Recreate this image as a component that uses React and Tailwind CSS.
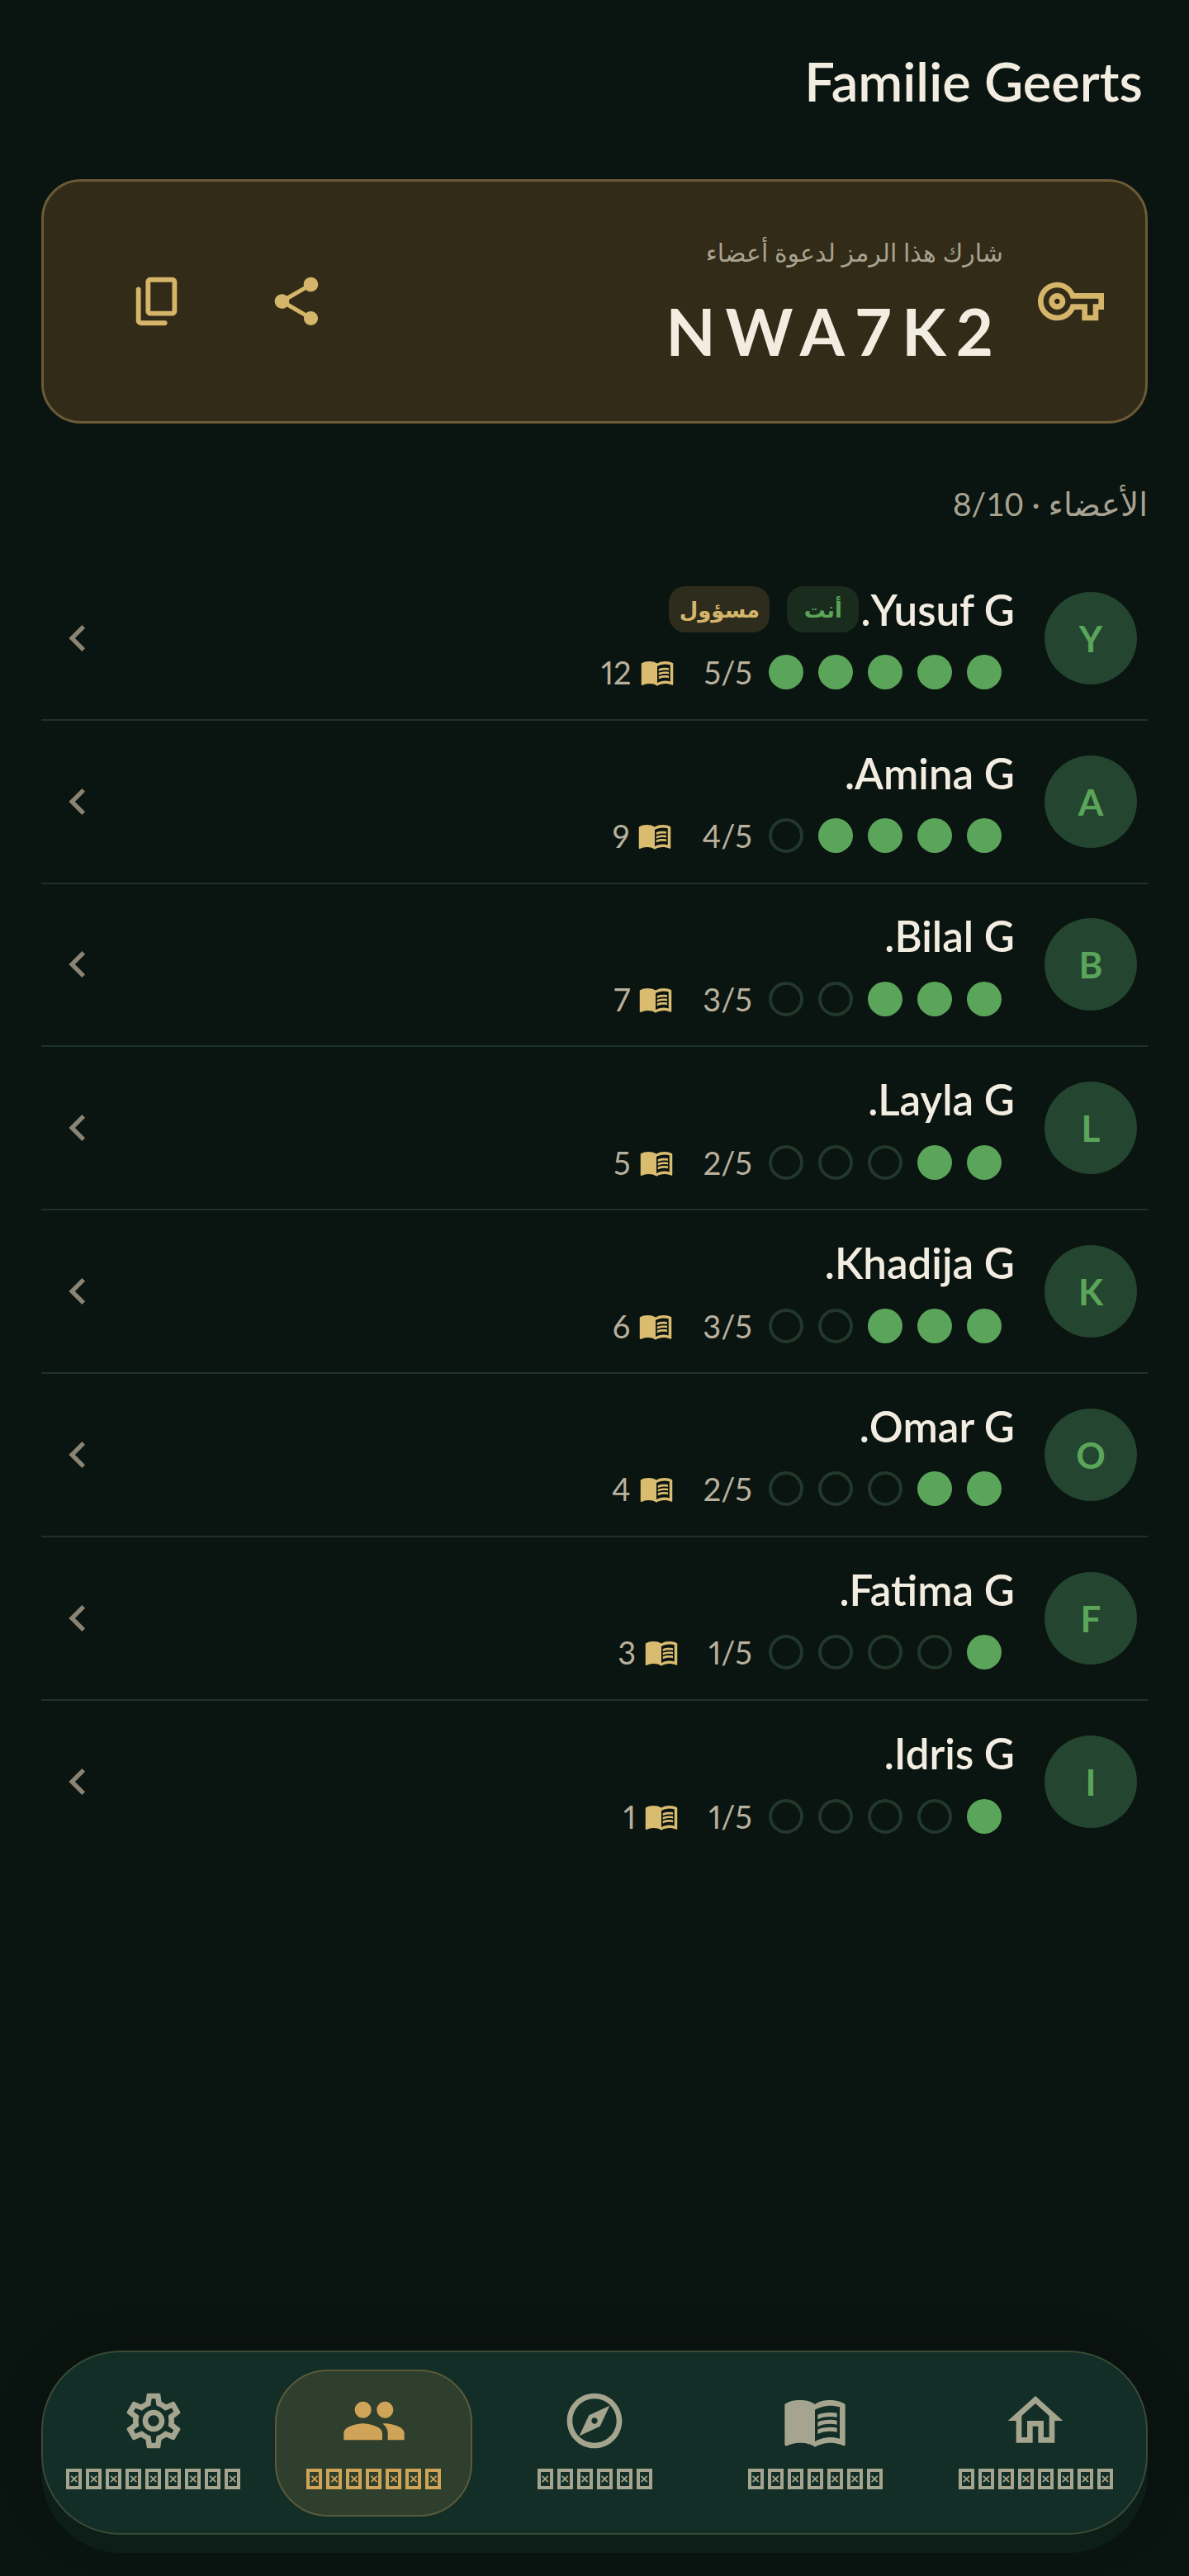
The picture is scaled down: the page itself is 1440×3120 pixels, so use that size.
import { MdChevronLeft, MdGroup, MdMenuBook, MdOutlineExplore, MdOutlineHome, MdOutlineSettings, MdOutlineVpnKey, MdShare } from 'react-icons/md'

const members = [
  { name: 'Yusuf G.', initial: 'Y', done: 5, books: 12, self: true },
  { name: 'Amina G.', initial: 'A', done: 4, books: 9 },
  { name: 'Bilal G.', initial: 'B', done: 3, books: 7 },
  { name: 'Layla G.', initial: 'L', done: 2, books: 5 },
  { name: 'Khadija G.', initial: 'K', done: 3, books: 6 },
  { name: 'Omar G.', initial: 'O', done: 2, books: 4 },
  { name: 'Fatima G.', initial: 'F', done: 1, books: 3 },
  { name: 'Idris G.', initial: 'I', done: 1, books: 1 }
]

const tabs = [
  { label: 'الرئيسية', Icon: MdOutlineHome },
  { label: 'التلاوة', Icon: MdMenuBook },
  { label: 'استكشف', Icon: MdOutlineExplore },
  { label: 'العائلة', Icon: MdGroup, active: true },
  { label: 'الإعدادات', Icon: MdOutlineSettings }
]

const CopyIcon = () => (
  <svg viewBox="0 0 24 24" fill="currentColor" className="w-[70px] h-[70px]">
    <path d="M15 20H5V7c0-.55-.45-1-1-1s-1 .45-1 1v13c0 1.1.9 2 2 2h10c.55 0 1-.45 1-1s-.45-1-1-1zm5-4V4c0-1.1-.9-2-2-2H9c-1.1 0-2 .9-2 2v12c0 1.1.9 2 2 2h9c1.1 0 2-.9 2-2zm-2 0H9V4h9v12z" />
  </svg>
)

// the labels show up as missing-glyph boxes in the reference
const TofuLabel = ({ label }) => (
  <div aria-label={label} className="flex gap-[5px]">
    {Array.from(label).map((ch, i) => (
      <span key={i} className="flex items-center justify-center w-[19px] h-[25px] border-[4px] border-current text-[14px] font-bold leading-none font-['DejaVu_Sans',sans-serif]">
        ×
      </span>
    ))}
  </div>
)

const MemberRow = ({ member, last }) => (
  <div className={`flex items-center h-[197.8px] pr-[13px] pl-[12px] ${last ? '' : 'border-b-2 border-[#1F3229]'}`}>
    <div className="flex items-center justify-center w-[112px] h-[112px] rounded-full bg-[#24452F] text-[#5AA55A] text-[44px] font-bold">
      {member.initial}
    </div>
    <div className="flex-1 mr-[36px]">
      <div className="flex items-center h-[56px] gap-[2px]">
        <span className="text-[#F2EDE0] text-[51px] font-semibold leading-none">{member.name}</span>
        {member.self && (
          <div className="flex gap-[21px]">
            <span className="flex items-center justify-center w-[87px] h-[56px] rounded-[20px] bg-[#1A2C1D] text-[#5AA55A] text-[26px] font-semibold">أنت</span>
            <span className="flex items-center justify-center w-[122px] h-[56px] rounded-[20px] bg-[#2E2C1C] text-[#D4B56A] text-[26px] font-semibold">مسؤول</span>
          </div>
        )}
      </div>
      <div className="flex items-center mt-[27px] pr-[16px]">
        <div className="flex gap-[18px]">
          {[0, 1, 2, 3, 4].map((i) => (
            <span
              key={i}
              className={i < member.done ? 'w-[42px] h-[42px] rounded-full bg-[#5AA55A]' : 'w-[42px] h-[42px] rounded-full border-[4px] border-[#22382C]'}
            />
          ))}
        </div>
        <span className="mr-[20px] text-[#B8B09C] text-[38px] leading-none proportional-nums" dir="ltr">{member.done}/5</span>
        <MdMenuBook className="mr-[36px] w-[42px] h-[42px] text-[#D9BC70]" />
        <span className="mr-[10px] text-[#B8B09C] text-[38px] leading-none proportional-nums">{member.books}</span>
      </div>
    </div>
    <MdChevronLeft className="w-[64px] h-[64px] text-[#8A8474]" />
  </div>
)

const App = () => {
  return (
    <div dir="rtl" className="min-h-screen flex flex-col bg-[#0A1410] px-[50px] pb-[50px] font-['Lato','DejaVu_Sans',sans-serif]">
      {/* Header */}
      <div className="flex items-center h-[217px] pb-[20px] pr-[6px]">
        <h1 className="text-[#F2EDE0] text-[65px] font-semibold" dir="ltr">Familie Geerts</h1>
      </div>

      {/* Invite code */}
      <div className="flex items-center h-[296px] pr-[50px] pl-[103px] rounded-[48px] border-[3px] border-[#6B5A35] bg-[#322B17]">
        <MdOutlineVpnKey className="w-[80px] h-[80px] text-[#D4B56A]" />
        <div className="mr-[42px] pb-[5px]">
          <p className="text-[#A8A290] text-[30px] leading-[40px]">شارك هذا الرمز لدعوة أعضاء</p>
          <p className="mt-[37px] text-[#F2EDE0] text-[78px] font-bold leading-none tracking-[12px]">NWA7K2</p>
        </div>
        <div className="flex gap-[98px] mr-auto text-[#D4B56A]">
          <MdShare className="w-[70px] h-[70px]" />
          <CopyIcon />
        </div>
      </div>

      <p className="mt-[72px] text-[#A8A290] text-[39px] leading-[50px]">الأعضاء · 8/10</p>

      {/* Members */}
      <div className="mt-[40px]">
        {members.map((member, i) => (
          <MemberRow key={member.initial} member={member} last={i === members.length - 1} />
        ))}
      </div>

      {/* Bottom nav */}
      <div className="flex items-center h-[223px] mt-auto rounded-[96px] border-2 border-[#3A4A35] bg-[#122E26] shadow-[0_22px_0_#0D1D18,0_0_60px_rgba(0,0,0,0.2)]">
        {tabs.map(({ label, Icon, active }) => (
          <div key={label} className="flex-1 flex justify-center">
            <div className={`flex flex-col items-center justify-center w-[239px] h-[178px] pb-[11px] rounded-[64px] border-2 ${active ? 'border-[#5A5A3A] bg-[#2F3F2D] text-[#D0A458]' : 'border-transparent text-[#A5A58F]'}`}>
              <Icon className="w-[80px] h-[80px]" />
              <div className="mt-[18px]">
                <TofuLabel label={label} />
              </div>
            </div>
          </div>
        ))}
      </div>
    </div>
  )
}

export default App
